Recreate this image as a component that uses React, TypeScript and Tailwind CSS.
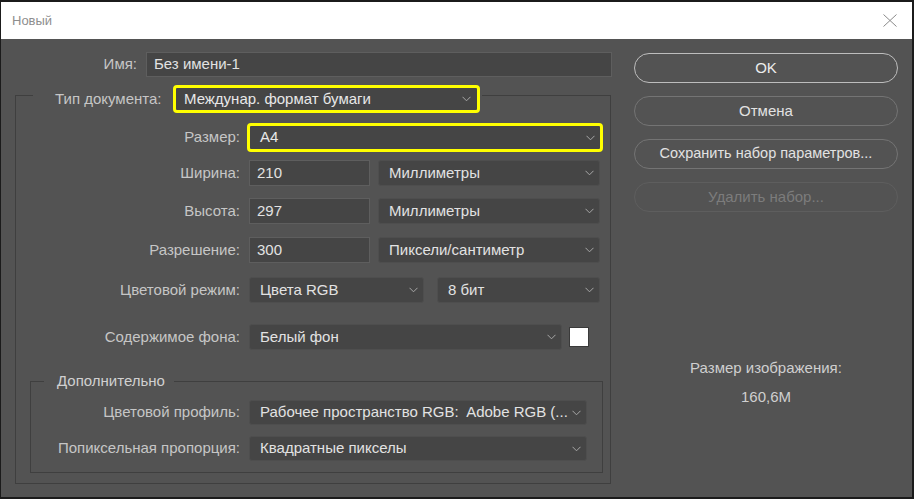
import React from 'react';

const font = { fontFamily: '"Liberation Sans", Arial, sans-serif' };

const Chevron: React.FC = () => (
  <svg width="9" height="6" viewBox="0 0 9 6" className="shrink-0">
    <path d="M0.5 0.8 L4.5 4.8 L8.5 0.8" fill="none" stroke="#a8a8a8" strokeWidth="1" />
  </svg>
);

const Select: React.FC<{ value: string; className?: string }> = ({ value, className = '' }) => (
  <div
    className={`flex items-center justify-between pl-[10px] pr-[5px] bg-[#454545] border border-[#4e4e4e] rounded-[3px] text-[#e2e2e2] ${className}`}
  >
    <span className="whitespace-pre">{value}</span>
    <Chevron />
  </div>
);

const Input: React.FC<{ value: string; className?: string }> = ({ value, className = '' }) => (
  <div
    className={`flex items-center pl-[7px] bg-[#454545] border border-[#5e5e5e] text-[#e2e2e2] ${className}`}
  >
    {value}
  </div>
);

const Label: React.FC<{ text: string; className?: string }> = ({ text, className = '' }) => (
  <div className={`text-right text-[#c6c6c6] whitespace-nowrap ${className}`}>{text}</div>
);

const App: React.FC = () => {
  return (
    <div className="w-[914px] h-[499px] bg-[#1b1b1b] overflow-hidden text-[15px]" style={font}>
      <div className="ml-[1px] mt-[2px] w-[911px] h-[495px] bg-[#535353] flex flex-col">
        {/* Title bar */}
        <div className="h-[37px] bg-white flex items-center justify-between pl-[11px] pr-[15px]">
          <span className="text-[13px] text-[#8e8e8e]">Новый</span>
          <svg width="14" height="13" viewBox="0 0 14 13">
            <path d="M0.5 0.5 L13.5 12.5 M13.5 0.5 L0.5 12.5" stroke="#8a8a8a" strokeWidth="1" fill="none" />
          </svg>
        </div>

        <div className="flex">
          {/* Left column */}
          <div className="w-[622px] pt-[13px]">
            <div className="flex items-center gap-[9px]">
              <Label text="Имя:" className="w-[136px]" />
              <Input value="Без имени-1" className="w-[466px] h-[25px]" />
            </div>

            <fieldset className="ml-[14px] w-[596px] border border-[#3f3f3f]">
              <legend className="ml-[17px]">
                <div className="flex items-end h-[36px] pr-[2px]">
                  <span className="ml-[22px] w-[118px] leading-[28px] text-[#c6c6c6] whitespace-nowrap">Тип документа:</span>
                  <div className="w-[307px] h-[28px] border-[3px] border-[#ffff00] rounded-[4px] bg-[#454545] flex items-center justify-between pl-[8px] pr-[6px] text-[#e8e8e8]">
                    <span>Междунар. формат бумаги</span>
                    <Chevron />
                  </div>
                </div>
              </legend>

              <div className="pb-[10px]">
                <div className="mt-[10px] flex items-center gap-[7px]">
                  <Label text="Размер:" className="w-[224px]" />
                  <div className="w-[356px] h-[29px] border-[3px] border-[#ffff00] rounded-[4px] bg-[#454545] flex items-center justify-between pl-[10px] pr-[5px] text-[#e8e8e8]">
                    <span>A4</span>
                    <Chevron />
                  </div>
                </div>

                <div className="mt-[8px] flex items-center gap-[9px]">
                  <Label text="Ширина:" className="w-[224px]" />
                  <Input value="210" className="w-[121px] h-[26px]" />
                  <Select value="Миллиметры" className="ml-[-1px] w-[222px] h-[26px]" />
                </div>

                <div className="mt-[12px] flex items-center gap-[9px]">
                  <Label text="Высота:" className="w-[224px]" />
                  <Input value="297" className="w-[121px] h-[26px]" />
                  <Select value="Миллиметры" className="ml-[-1px] w-[222px] h-[26px]" />
                </div>

                <div className="mt-[13px] flex items-center gap-[9px]">
                  <Label text="Разрешение:" className="w-[224px]" />
                  <Input value="300" className="w-[121px] h-[26px]" />
                  <Select value="Пиксели/сантиметр" className="ml-[-1px] w-[222px] h-[26px]" />
                </div>

                <div className="mt-[14px] flex items-center gap-[9px]">
                  <Label text="Цветовой режим:" className="w-[224px]" />
                  <Select value="Цвета RGB" className="w-[175px] h-[26px]" />
                  <Select value="8 бит" className="ml-[4px] w-[163px] h-[26px]" />
                </div>

                <div className="mt-[21px] flex items-center gap-[9px]">
                  <Label text="Содержимое фона:" className="w-[224px]" />
                  <Select value="Белый фон" className="w-[313px] h-[26px]" />
                  <div className="ml-[-2px] w-[20px] h-[20px] bg-white border border-[#3a3a3a]" />
                </div>

                <fieldset className="mt-[22px] ml-[14px] w-[573px] border border-[#3f3f3f]">
                  <legend className="ml-[13px] pl-[13px] pr-[9px] leading-[18px] text-[#d0d0d0]">Дополнительно</legend>
                  <div className="pb-[11px]">
                    <div className="mt-[10px] flex items-center gap-[9px]">
                      <Label text="Цветовой профиль:" className="w-[209px]" />
                      <Select value="Рабочее пространство RGB:  Adobe RGB (..." className="w-[338px] h-[25px]" />
                    </div>
                    <div className="mt-[11px] flex items-center gap-[9px]">
                      <Label text="Попиксельная пропорция:" className="w-[209px]" />
                      <Select value="Квадратные пикселы" className="w-[338px] h-[25px]" />
                    </div>
                  </div>
                </fieldset>
              </div>
            </fieldset>
          </div>

          {/* Right column */}
          <div className="pl-[11px] pt-[14px] flex flex-col">
            <div className="w-[264px] h-[30px] rounded-full border-[1.5px] border-[#bdbdbd] flex items-center justify-center text-[#ececec]">
              OK
            </div>
            <div className="mt-[13px] w-[264px] h-[30px] rounded-full border border-[#747474] flex items-center justify-center text-[#e2e2e2]">
              Отмена
            </div>
            <div className="mt-[13px] w-[264px] h-[30px] rounded-full border border-[#747474] flex items-center justify-center text-[#e2e2e2] text-[14.5px]">
              Сохранить набор параметров...
            </div>
            <div className="mt-[13px] w-[264px] h-[30px] rounded-full border border-[#5e5e5e] flex items-center justify-center text-[#7c7c7c]">
              Удалить набор...
            </div>
            <div className="mt-[146px] w-[264px] text-center leading-[20px] text-[#cfcfcf]">Размер изображения:</div>
            <div className="mt-[9px] w-[264px] text-center leading-[20px] text-[#cfcfcf]">160,6M</div>
          </div>
        </div>
      </div>
    </div>
  );
};

export default App;
